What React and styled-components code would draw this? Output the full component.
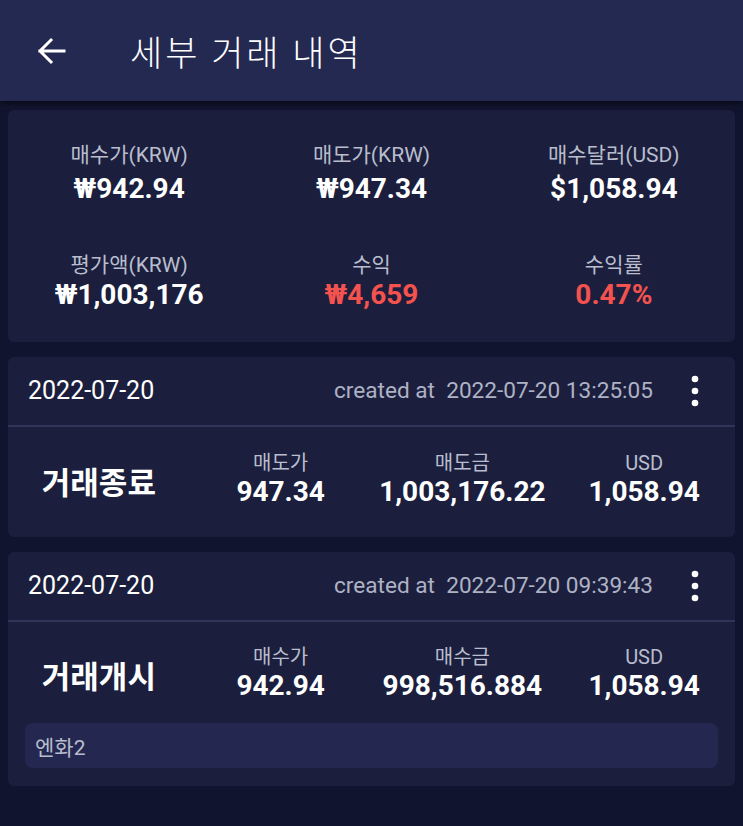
import React from 'react';
import styled, { createGlobalStyle } from 'styled-components';

const GlobalStyle = createGlobalStyle`
  html, body {
    margin: 0;
    padding: 0;
    background: #10142e;
  }
  body {
    font-family: Roboto, 'Noto Sans CJK KR', sans-serif;
    color: #fff;
    -webkit-font-smoothing: antialiased;
  }
`;

const summary = [
  { label: '매수가(KRW)', value: '₩942.94' },
  { label: '매도가(KRW)', value: '₩947.34' },
  { label: '매수달러(USD)', value: '$1,058.94' },
  { label: '평가액(KRW)', value: '₩1,003,176' },
  { label: '수익', value: '₩4,659', red: true },
  { label: '수익률', value: '0.47%', red: true },
];

const trades = [
  {
    date: '2022-07-20',
    created: '2022-07-20 13:25:05',
    title: '거래종료',
    cols: [
      { label: '매도가', value: '947.34' },
      { label: '매도금', value: '1,003,176.22' },
      { label: 'USD', value: '1,058.94' },
    ],
  },
  {
    date: '2022-07-20',
    created: '2022-07-20 09:39:43',
    title: '거래개시',
    cols: [
      { label: '매수가', value: '942.94' },
      { label: '매수금', value: '998,516.884' },
      { label: 'USD', value: '1,058.94' },
    ],
    memo: '엔화2',
  },
];

const BackArrow = () => (
  <svg width='30' height='30' viewBox='0 0 30 30' fill='none'>
    <path
      d='M28 15H4M15 4L4 15L15 26'
      stroke='#fff'
      strokeWidth='3'
      strokeLinecap='square'
    />
  </svg>
);

const MoreIcon = () => (
  <svg width='8' height='32' viewBox='0 0 8 32'>
    <circle cx='4' cy='4' r='3.3' fill='#fff' />
    <circle cx='4' cy='16' r='3.3' fill='#fff' />
    <circle cx='4' cy='28' r='3.3' fill='#fff' />
  </svg>
);

export default function App() {
  return (
    <Page>
      <GlobalStyle />
      <Header>
        <BackButton>
          <BackArrow />
        </BackButton>
        <Title>세부 거래 내역</Title>
      </Header>

      <SummaryCard>
        {summary.map((s, i) => (
          <Stat key={s.label}>
            <StatLabel>{s.label}</StatLabel>
            <StatValue $red={s.red} $first={i < 3}>
              {s.value}
            </StatValue>
          </Stat>
        ))}
      </SummaryCard>

      {trades.map((t) => (
        <TradeCard key={t.created}>
          <TradeHeader>
            <DateText>{t.date}</DateText>
            <Created>{'created at  ' + t.created}</Created>
            <MoreButton>
              <MoreIcon />
            </MoreButton>
          </TradeHeader>
          <TradeBody $memo={!!t.memo}>
            <TradeTitle>{t.title}</TradeTitle>
            {t.cols.map((c) => (
              <Stat key={c.label}>
                <ColLabel>{c.label}</ColLabel>
                <ColValue>{c.value}</ColValue>
              </Stat>
            ))}
          </TradeBody>
          {t.memo && <Memo>{t.memo}</Memo>}
        </TradeCard>
      ))}
    </Page>
  );
}

const Page = styled.div`
  min-height: 100vh;
  background: #10142e;
  display: flex;
  flex-direction: column;
  padding-bottom: 20px;
`;

const Header = styled.header`
  height: 101px;
  background: #242952;
  display: flex;
  align-items: center;
  padding-left: 36px;
  box-shadow: 0 2px 6px rgba(0, 0, 0, 0.55);
  position: relative;
  z-index: 1;
`;

const BackButton = styled.div`
  width: 30px;
  height: 30px;
  display: flex;
  align-items: center;
  justify-content: center;
  margin-top: 1px;
`;

const Title = styled.h1`
  margin: 0 0 0 64px;
  font-family: 'Noto Sans CJK KR', sans-serif;
  font-size: 35px;
  font-weight: 300;
  letter-spacing: 3px;
  line-height: 44px;
  color: #fff;
`;

const Card = styled.section`
  margin: 0 8px;
  background: #1b1f3d;
  border-radius: 6px;
`;

const SummaryCard = styled(Card)`
  margin-top: 9px;
  display: grid;
  grid-template-columns: repeat(3, 1fr);
  row-gap: 46px;
  padding: 32px 0 30px;
`;

const Stat = styled.div`
  display: flex;
  flex-direction: column;
  align-items: center;
`;

const StatLabel = styled.div`
  font-size: 21px;
  line-height: 26px;
  color: #b9bdcd;
  white-space: nowrap;
`;

const StatValue = styled.div`
  margin-top: ${(p) => (p.$first ? '4px' : '0')};
  font-size: 28px;
  font-weight: 700;
  line-height: 34px;
  color: ${(p) => (p.$red ? '#f4524f' : '#ffffff')};
  white-space: nowrap;
`;

const TradeCard = styled(Card)`
  margin-top: 15px;
`;

const TradeHeader = styled.div`
  height: 68px;
  display: flex;
  align-items: center;
  padding: 0 36px 0 20px;
  border-bottom: 2px solid #2f3459;
`;

const DateText = styled.div`
  font-size: 25px;
  line-height: 28px;
  color: #fff;
`;

const Created = styled.div`
  margin-left: auto;
  font-size: 22.6px;
  line-height: 28px;
  color: #aeb2c4;
  white-space: pre;
`;

const MoreButton = styled.div`
  margin-left: 38px;
  display: flex;
  align-items: center;
`;

const TradeBody = styled.div`
  display: grid;
  grid-template-columns: repeat(4, 1fr);
  padding: ${(p) => (p.$memo ? '22px 0 0' : '23px 0 30px')};
`;

const TradeTitle = styled.div`
  align-self: center;
  justify-self: center;
  margin-top: 10px;
  font-size: 31px;
  font-weight: 700;
  line-height: 36px;
  color: #fff;
`;

const ColLabel = styled.div`
  font-size: 20px;
  line-height: 26px;
  color: #b9bdcd;
`;

const ColValue = styled.div`
  margin-top: 1px;
  font-size: 28px;
  font-weight: 700;
  line-height: 30px;
  color: #fff;
  white-space: nowrap;
`;

const Memo = styled.div`
  margin: 22px 17px 18px;
  height: 45px;
  display: flex;
  align-items: center;
  padding-left: 10px;
  border-radius: 8px;
  background: #242850;
  font-size: 21px;
  color: #b9bdcd;
`;
